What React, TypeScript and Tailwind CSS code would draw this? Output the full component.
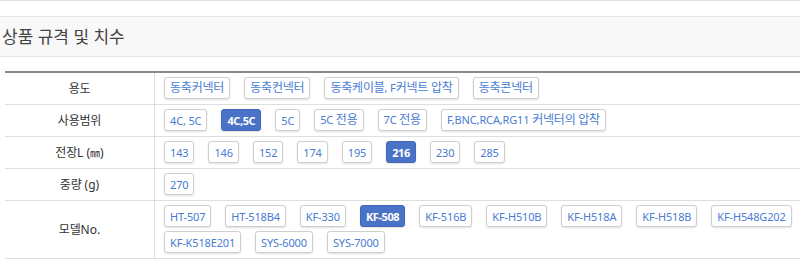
import React from 'react';

type Spec = { label: string; items: string[]; active?: string };

const SPECS: Spec[] = [
  { label: '용도', items: ['동축커넥터', '동축컨넥터', '동축케이블, F커넥트 압착', '동축콘넥터'] },
  { label: '사용범위', items: ['4C, 5C', '4C,5C', '5C', '5C 전용', '7C 전용', 'F,BNC,RCA,RG11 커넥터의 압착'], active: '4C,5C' },
  { label: '전장L (㎜)', items: ['143', '146', '152', '174', '195', '216', '230', '285'], active: '216' },
  { label: '중량 (g)', items: ['270'] },
  {
    label: '모델No.',
    items: ['HT-507', 'HT-518B4', 'KF-330', 'KF-508', 'KF-516B', 'KF-H510B', 'KF-H518A', 'KF-H518B', 'KF-H548G202', 'KF-K518E201', 'SYS-6000', 'SYS-7000'],
    active: 'KF-508',
  },
];

// hangul runs get a slightly larger size so latin and hangul widths match the original font
const Mixed: React.FC<{ text: string }> = ({ text }) => (
  <span>
    {text.split(/([가-힣]+|㎜)/).map((part, i) =>
      /[가-힣]/.test(part) ? (
        <span key={i} className="text-[12px] tracking-[-0.2px]">
          {part}
        </span>
      ) : part === '㎜' ? (
        <span key={i} className="text-[10px] font-['Noto_Sans_CJK_KR',sans-serif]">
          {part}
        </span>
      ) : (
        part
      )
    )}
  </span>
);

const Chip: React.FC<{ text: string; active: boolean }> = ({ text, active }) => (
  <span
    className={`h-[22px] px-[5px] flex items-center rounded-[3px] border text-[11px] leading-none whitespace-nowrap shadow-[0_1px_2px_rgba(0,0,0,0.12)] ${
      active
        ? 'bg-[#4a72c6] border-[#4068b8] text-white font-bold tracking-[-0.4px]'
        : 'bg-white border-[#cfcfcf] text-[#4a7bd3] tracking-[-0.15px]'
    }`}
  >
    <Mixed text={text} />
  </span>
);

export default function App() {
  return (
    <div className="w-[800px] h-[269px] bg-white overflow-hidden font-['Noto_Sans','Noto_Sans_CJK_KR',sans-serif]">
      <div className="border-t border-[#e3e3e3] pt-[15px]">
        <div className="h-[41px] bg-[#f8f8f8] border-y border-[#e6e6e6] flex items-center pl-[2px] text-[17px] text-[#444]">
          상품 규격 및 치수
        </div>
      </div>

      <div className="ml-[5px] mt-[14px] border-t-2 border-[#8a8a8a]">
        {SPECS.map((row) => (
          <div key={row.label} className="flex border-b border-[#dedede]">
            <div className="w-[150px] shrink-0 border-r border-[#dedede] flex items-center justify-center text-[12px] text-[#333]">
              <Mixed text={row.label} />
            </div>
            <div className="flex-1 flex flex-wrap gap-x-[14px] gap-y-[4px] pl-[9px] pt-[4px] pb-[5px]">
              {row.items.map((t) => (
                <Chip key={t} text={t} active={t === row.active} />
              ))}
            </div>
          </div>
        ))}
      </div>
    </div>
  );
}
